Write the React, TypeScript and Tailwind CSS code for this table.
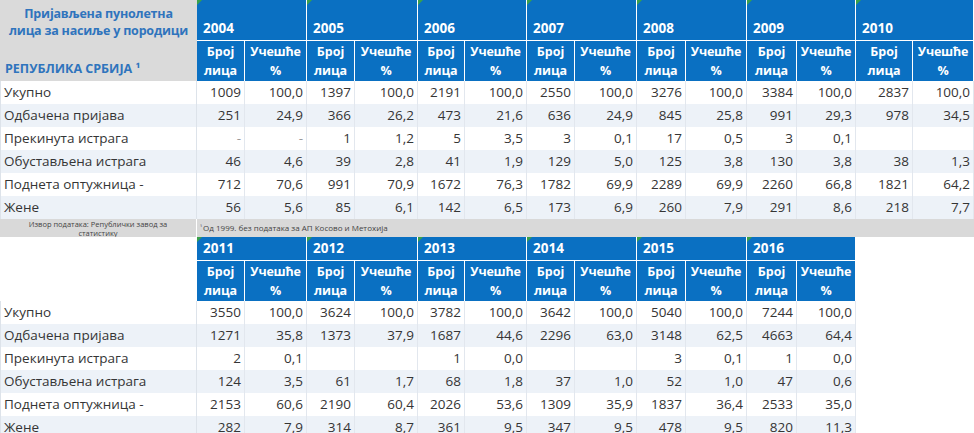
import React from 'react'

const GRID =
  'grid grid-cols-[197px_48px_62px_48px_63px_47px_62px_48px_62px_49px_61px_50px_59px_57px_61px]'

type Row = { label: string; values: string[] }

const TOP_YEARS = ['2004', '2005', '2006', '2007', '2008', '2009', '2010']
const BOTTOM_YEARS = ['2011', '2012', '2013', '2014', '2015', '2016']

const TOP_ROWS: Row[] = [
  { label: 'Укупно', values: ['1009', '100,0', '1397', '100,0', '2191', '100,0', '2550', '100,0', '3276', '100,0', '3384', '100,0', '2837', '100,0'] },
  { label: 'Одбачена пријава', values: ['251', '24,9', '366', '26,2', '473', '21,6', '636', '24,9', '845', '25,8', '991', '29,3', '978', '34,5'] },
  { label: 'Прекинута истрага', values: ['-', '-', '1', '1,2', '5', '3,5', '3', '0,1', '17', '0,5', '3', '0,1', '', ''] },
  { label: 'Обустављена истрага', values: ['46', '4,6', '39', '2,8', '41', '1,9', '129', '5,0', '125', '3,8', '130', '3,8', '38', '1,3'] },
  { label: 'Поднета оптужница -', values: ['712', '70,6', '991', '70,9', '1672', '76,3', '1782', '69,9', '2289', '69,9', '2260', '66,8', '1821', '64,2'] },
  { label: 'Жене', values: ['56', '5,6', '85', '6,1', '142', '6,5', '173', '6,9', '260', '7,9', '291', '8,6', '218', '7,7'] },
]

const BOTTOM_ROWS: Row[] = [
  { label: 'Укупно', values: ['3550', '100,0', '3624', '100,0', '3782', '100,0', '3642', '100,0', '5040', '100,0', '7244', '100,0'] },
  { label: 'Одбачена пријава', values: ['1271', '35,8', '1373', '37,9', '1687', '44,6', '2296', '63,0', '3148', '62,5', '4663', '64,4'] },
  { label: 'Прекинута истрага', values: ['2', '0,1', '', '', '1', '0,0', '', '', '3', '0,1', '1', '0,0'] },
  { label: 'Обустављена истрага', values: ['124', '3,5', '61', '1,7', '68', '1,8', '37', '1,0', '52', '1,0', '47', '0,6'] },
  { label: 'Поднета оптужница -', values: ['2153', '60,6', '2190', '60,4', '2026', '53,6', '1309', '35,9', '1837', '36,4', '2533', '35,0'] },
  { label: 'Жене', values: ['282', '7,9', '314', '8,7', '361', '9,5', '347', '9,5', '478', '9,5', '820', '11,3'] },
]

function Corner() {
  return (
    <span className="absolute left-0 top-0 h-0 w-0 border-r-[5px] border-t-[5px] border-r-transparent border-t-[#3aa04a]" />
  )
}

function YearRow({ years, tall }: { years: string[]; tall?: boolean }) {
  return (
    <div className={`${GRID} ${tall ? 'h-[40px]' : 'h-[23px]'}`}>
      {tall ? (
        <div className="flex flex-col items-center justify-end whitespace-nowrap bg-[#dadada] pb-[1px] text-[12.5px] font-bold leading-[17px] tracking-[-0.2px] text-[#2f74bd]">
          <span>Пријављена пунолетна</span>
          <span>лица за насиље у породици</span>
        </div>
      ) : (
        <div className="bg-white" />
      )}
      {years.map((y) => (
        <div
          key={y}
          className={`relative col-span-2 flex border-r border-white bg-[#0a70c2] pl-[6px] text-[13.5px] font-bold text-white ${
            tall ? 'items-end pb-[2px]' : 'items-center'
          }`}
        >
          <Corner />
          {y}
        </div>
      ))}
    </div>
  )
}

function SubHeader({ count, withLabel }: { count: number; withLabel?: boolean }) {
  return (
    <div className={`${GRID} h-[41px]`}>
      {withLabel ? (
        <div className="flex items-end whitespace-nowrap bg-[#dadada] pb-[2px] pl-[5px] text-[12.5px] font-bold text-[#2f74bd]">
          РЕПУБЛИКА СРБИЈА ¹
        </div>
      ) : (
        <div className="bg-white" />
      )}
      {Array.from({ length: count }).map((_, i) => (
        <React.Fragment key={i}>
          <div className="flex flex-col items-center justify-center whitespace-nowrap border-r border-t border-white bg-[#0a70c2] text-[12.5px] font-bold leading-[19px] text-white">
            <span>Број</span>
            <span>лица</span>
          </div>
          <div className="flex flex-col items-center justify-center whitespace-nowrap border-r border-t border-white bg-[#0a70c2] text-[12.5px] font-bold leading-[19px] tracking-[-0.2px] text-white">
            <span>Учешће</span>
            <span>%</span>
          </div>
        </React.Fragment>
      ))}
    </div>
  )
}

function DataRow({ row, shaded }: { row: Row; shaded: boolean }) {
  const bg = shaded ? 'bg-[#edf2f8]' : 'bg-white'
  return (
    <div className={`${GRID} h-[23px] text-[13.5px] text-[#353535]`}>
      <div className={`flex items-center border-l border-r border-[#dde3ea] pl-[3px] ${bg}`}>{row.label}</div>
      {row.values.map((v, i) => (
        <div
          key={i}
          className={`flex items-center justify-end border-r border-[#e2e7ee] pr-[3px] ${bg} ${
            v === '-' ? 'text-[#9a9a9a]' : ''
          }`}
        >
          {v}
        </div>
      ))}
    </div>
  )
}

export default function App() {
  return (
    <div className="h-[433px] w-[974px] overflow-hidden bg-white font-['Open_Sans',sans-serif]">
      <YearRow years={TOP_YEARS} tall />
      <SubHeader count={7} withLabel />
      {TOP_ROWS.map((r, i) => (
        <DataRow key={r.label} row={r} shaded={i % 2 === 1} />
      ))}

      <div className="flex h-[18px] bg-[#d9d9d9] text-[#444]">
        <div className="flex w-[197px] flex-col items-center overflow-hidden border-r border-white pt-[1px] text-[7.5px] leading-[9px]">
          <span>Извор података: Републички завод за</span>
          <span>статистику</span>
        </div>
        <div className="flex items-center pl-[3px] text-[8px]">
          <span className="mr-[1px] text-[6px]">¹</span>Од 1999. без података за АП Косово и Метохија
        </div>
      </div>

      <YearRow years={BOTTOM_YEARS} />
      <SubHeader count={6} />
      {BOTTOM_ROWS.map((r, i) => (
        <DataRow key={r.label} row={r} shaded={i % 2 === 1} />
      ))}
    </div>
  )
}
